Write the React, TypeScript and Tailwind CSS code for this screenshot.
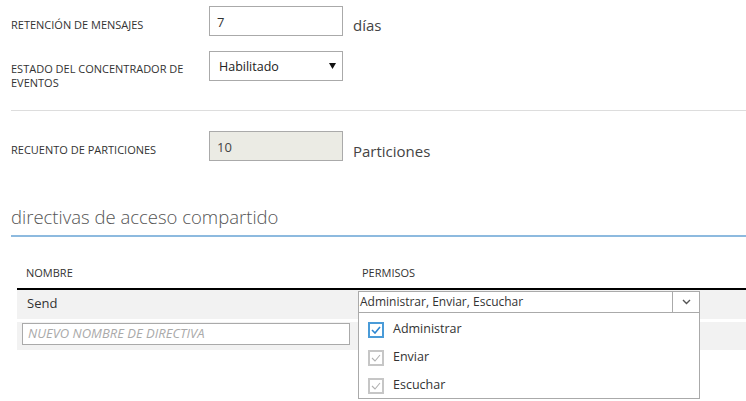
import React from 'react';

const font = { fontFamily: '"Open Sans", "Noto Sans", sans-serif' };

const Check: React.FC<{ active?: boolean }> = ({ active }) => (
  <span
    className={
      active
        ? 'flex h-[16px] w-[16px] shrink-0 items-center justify-center border-2 border-[#4a9bd8] bg-white'
        : 'flex h-[16px] w-[16px] shrink-0 items-center justify-center border-2 border-[#c6c6c6] bg-white'
    }
  >
    <svg width="10" height="8" viewBox="0 0 10 8" fill="none">
      <path
        d="M1 4 L4 7 L9 1"
        stroke={active ? '#2e86d1' : '#b0b0b0'}
        strokeWidth={active ? 1.6 : 1.1}
      />
    </svg>
  </span>
);

const options: [string, boolean][] = [
  ['Administrar', true],
  ['Enviar', false],
  ['Escuchar', false],
];

export default function App() {
  return (
    <div className="h-[401px] w-[746px] overflow-hidden bg-white text-[#333]" style={font}>
      {/* retención */}
      <div className="flex items-start pt-[6px]">
        <div className="mt-[12px] w-[209px] pl-[11px] text-[11px] uppercase leading-[14px]">
          Retención de mensajes
        </div>
        <div className="flex h-[30px] w-[134px] items-start border border-[#aaaaaa] pl-[7px] pt-[6px] text-[13px] leading-[18px]">
          7
        </div>
        <div className="ml-[10px] mt-[9px] text-[15px] leading-[20px] text-[#444]">días</div>
      </div>

      {/* estado */}
      <div className="mt-[15px] flex items-start">
        <div className="mt-[11px] w-[209px] pl-[11px] text-[11px] uppercase leading-[14px]">
          Estado del concentrador de
          <br />
          eventos
        </div>
        <div className="flex h-[30px] w-[134px] items-center justify-between border border-[#aaaaaa] pl-[9px] pr-[6px] pt-[2px] text-[12.5px] text-[#222]">
          <span>Habilitado</span>
          <svg width="7" height="6" viewBox="0 0 7 6" className="-mt-[3px]">
            <path d="M0 0 H7 L3.5 6 Z" fill="#111" />
          </svg>
        </div>
      </div>

      <div className="ml-[11px] mt-[20px] h-px bg-[#dddddd]" />

      {/* particiones */}
      <div className="mt-[20px] flex items-start">
        <div className="mt-[12px] w-[209px] pl-[11px] text-[11px] uppercase leading-[14px]">
          Recuento de particiones
        </div>
        <div className="flex h-[30px] w-[134px] items-start border border-[#aaaaaa] bg-[#ebebe4] pl-[7px] pt-[6px] text-[13px] leading-[18px] text-[#444]">
          10
        </div>
        <div className="ml-[10px] mt-[10px] text-[15px] leading-[20px] text-[#444]">Particiones</div>
      </div>

      {/* heading */}
      <div className="ml-[11px] mt-[43px] text-[18.5px] font-light leading-[26px] text-[#555]">
        directivas de acceso compartido
      </div>
      <div className="ml-[11px] mt-[5px] h-[2px] bg-[#8dbadf]" />

      {/* table */}
      <div className="ml-[17px] mt-[29px]">
        <div className="flex text-[11px] uppercase leading-[14px]">
          <div className="w-[341px] pl-[9px]">Nombre</div>
          <div className="pl-[4px]">Permisos</div>
        </div>
        <div className="mt-[8px] h-[2px] bg-black" />

        <div className="flex h-[29px] bg-[#f2f2f2]">
          <div className="w-[341px] pl-[10px] pt-[4px] text-[13px] leading-[18px]">Send</div>
          <div className="relative">
            <div className="mt-[1px] flex h-[22px] w-[342px] items-stretch border border-[#aaaaaa] bg-white">
              <div className="flex flex-1 items-center pl-[1px] text-[12px] text-[#333]">
                Administrar, Enviar, Escuchar
              </div>
              <div className="flex w-[27px] items-center justify-center border-l border-[#aaaaaa]">
                <svg width="9" height="6" viewBox="0 0 9 6" fill="none">
                  <path d="M1 1 L4.5 4.5 L8 1" stroke="#555" strokeWidth="1.4" />
                </svg>
              </div>
            </div>
            <div className="absolute left-0 top-[23px] z-10 flex h-[86px] w-[342px] flex-col overflow-hidden border border-t-0 border-[#aaaaaa] bg-white pt-[3px]">
              {options.map(([label, active]) => (
                <div key={label} className="flex h-[28px] shrink-0 items-center gap-[9px] pl-[9px]">
                  <Check active={active} />
                  <span className="-mt-[3px] text-[12.5px] leading-[18px] text-[#333]">{label}</span>
                </div>
              ))}
            </div>
          </div>
        </div>

        <div className="mt-[3px] flex h-[28px] bg-[#f2f2f2]">
          <div className="pl-[5px] pt-[1px]">
            <div className="flex h-[22px] w-[328px] items-center border border-[#aaaaaa] bg-white pl-[5px] text-[13px] italic text-[#aaaaaa]">
              NUEVO NOMBRE DE DIRECTIVA
            </div>
          </div>
        </div>
      </div>
    </div>
  );
}
